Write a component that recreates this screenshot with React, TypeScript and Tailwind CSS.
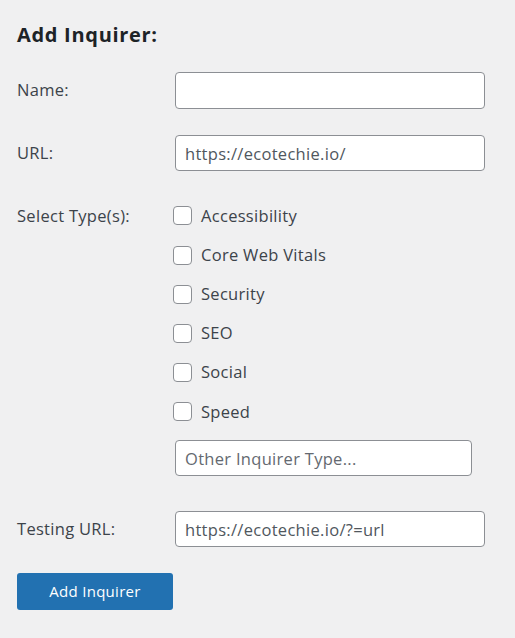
import React from "react";

const font = { fontFamily: '"Open Sans", "Noto Sans", sans-serif' };

const types = ["Accessibility", "Core Web Vitals", "Security", "SEO", "Social", "Speed"];

export default function App() {
  return (
    <div
      className="min-h-[638px] w-[515px] bg-[#f0f0f1] pl-[17px] pt-[23px] text-[16.5px] tracking-[0.3px] text-[#3c434a]"
      style={font}
    >
      <h2 className="flex h-[24px] items-center text-[20px] font-bold tracking-[0.7px] text-[#1d2327]">Add Inquirer:</h2>

      <div className="mt-[25px] flex h-[37px] items-center">
        <label className="w-[158px]">Name:</label>
        <input
          type="text"
          className="h-[37px] w-[310px] rounded-[4px] border border-[#8c8f94] bg-white px-[9px] text-[16.5px] tracking-[0.3px] text-[#2c3338] outline-none"
        />
      </div>

      <div className="mt-[26px] flex h-[36px] items-center">
        <label className="w-[158px]">URL:</label>
        <input
          type="text"
          defaultValue="https://ecotechie.io/"
          className="h-[36px] w-[310px] rounded-[4px] border border-[#8c8f94] bg-white px-[9px] text-[16.5px] tracking-[0.3px] text-[#50575e] outline-none"
        />
      </div>

      <div className="mt-[25.4px] flex">
        <div className="flex h-[39.2px] w-[158px] items-center">Select Type(s):</div>
        <div className="flex flex-col">
          {types.map((t) => (
            <label key={t} className="flex h-[39.2px] items-center">
              <input
                type="checkbox"
                className="-ml-[2px] h-[19px] w-[19px] appearance-none rounded-[4px] border border-[#8c8f94] bg-white"
              />
              <span className="ml-[9px]">{t}</span>
            </label>
          ))}
          <input
            type="text"
            placeholder="Other Inquirer Type..."
            className="mt-[8.7px] h-[36px] w-[297px] rounded-[4px] border border-[#8c8f94] bg-white px-[9px] text-[16.5px] tracking-[0.3px] text-[#2c3338] outline-none placeholder:text-[#646970]"
          />
        </div>
      </div>

      <div className="mt-[35px] flex h-[36px] items-center">
        <label className="w-[158px]">Testing URL:</label>
        <input
          type="text"
          defaultValue="https://ecotechie.io/?=url"
          className="h-[36px] w-[310px] rounded-[4px] border border-[#8c8f94] bg-white px-[9px] text-[16.5px] tracking-[0.3px] text-[#50575e] outline-none"
        />
      </div>

      <button
        type="button"
        className="mt-[26px] flex h-[37px] w-[156px] items-center justify-center rounded-[3px] bg-[#2271b1] text-[15px] tracking-[0.3px] text-white"
      >
        Add Inquirer
      </button>
    </div>
  );
}
